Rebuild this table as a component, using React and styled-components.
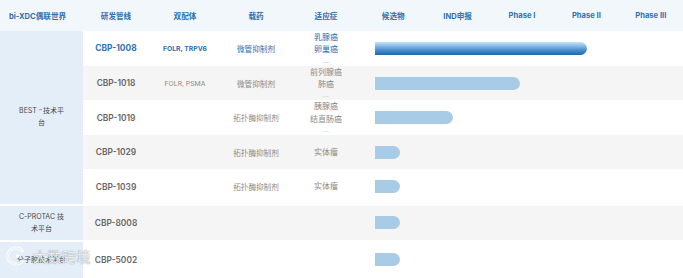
import React from 'react';
import styled, { createGlobalStyle } from 'styled-components';

const GlobalStyle = createGlobalStyle`
  html, body {
    margin: 0;
    padding: 0;
    background: #ffffff;
  }
  body {
    font-family: Inter, "Noto Sans CJK SC", sans-serif;
    width: 683px;
    height: 278px;
    overflow: hidden;
  }
`;

const Table = styled.div`
  position: relative;
  width: 683px;
  display: flex;
  flex-direction: column;
`;

const Header = styled.div`
  display: grid;
  grid-template-columns: 83px 66px 72px 70px 70px repeat(5, 1fr);
  height: 31px;
  background: #f2f7fc;
  align-items: center;
`;

const HeadCell = styled.div`
  text-align: center;
  font-size: 7.6px;
  font-weight: 700;
  color: #2f70ae;
  white-space: nowrap;
  padding-right: ${p => (p.$first ? '8px' : '0')};
`;

const Group = styled.div`
  display: flex;
  margin-top: ${p => (p.$first ? '0' : '2px')};
`;

const Platform = styled.div`
  width: 83px;
  flex-shrink: 0;
  background: #e3eef9;
  display: flex;
  align-items: center;
  justify-content: center;
`;

const PlatformText = styled.div`
  width: 51px;
  text-align: center;
  font-size: 7px;
  line-height: 12px;
  color: #4a4a4a;
`;

const Tm = styled.span`
  display: inline-block;
  font-size: 5px;
  line-height: 12px;
  vertical-align: top;
  margin-right: 1px;
`;

const Rows = styled.div`
  flex: 1;
  display: flex;
  flex-direction: column;
`;

const Row = styled.div`
  display: grid;
  grid-template-columns: 66px 72px 70px 70px 1fr;
  height: ${p => p.$h}px;
  align-items: center;
  background: ${p => (p.$gray ? '#f5f5f5' : '#ffffff')};
`;

const Code = styled.div`
  text-align: center;
  font-size: 8.4px;
  color: ${p => (p.$active ? '#2f70b0' : '#666666')};
  font-weight: ${p => (p.$active ? 700 : 600)};
`;

const Ligand = styled.div`
  text-align: center;
  font-size: 6.8px;
  white-space: nowrap;
  color: ${p => (p.$active ? '#2f70b0' : '#8a8a8a')};
  font-weight: ${p => (p.$active ? 700 : 400)};
`;

const Drug = styled.div`
  text-align: center;
  font-size: 7.6px;
  color: ${p => (p.$active ? '#2f70b0' : '#8a8a8a')};
`;

const Indication = styled.div`
  text-align: center;
  font-size: 8px;
  line-height: 12.4px;
  color: ${p => (p.$active ? '#2f70b0' : '#8a8a8a')};
  display: flex;
  flex-direction: column;
  align-items: center;
`;

const Dots = styled.span`
  font-size: 6px;
  line-height: 10px;
  letter-spacing: 0.5px;
`;

const Track = styled.div`
  padding-left: 14px;
  display: flex;
  align-items: center;
`;

const Bar = styled.div`
  width: ${p => p.$w}px;
  height: 13px;
  border-radius: 0 7px 7px 0;
  background: ${p =>
    p.$active
      ? 'linear-gradient(to bottom, #c6e3f8 0%, #8cc0ea 28%, #4a8fd0 62%, #1d66ae 100%)'
      : '#a9cce6'};
`;

const Watermark = styled.div`
  position: absolute;
  left: 5px;
  top: 246px;
  display: flex;
  align-items: center;
  gap: 6px;
  pointer-events: none;
`;

const WatermarkText = styled.span`
  font-family: "Noto Sans CJK SC", sans-serif;
  font-size: 14px;
  font-weight: 400;
  color: rgba(255, 255, 255, 0.85);
  letter-spacing: 0.5px;
  text-shadow: 0 0 1px rgba(120, 130, 140, 0.7), 0 0 1px rgba(120, 130, 140, 0.7);
`;

const headers = ['bi-XDC偶联世界', '研发管线', '双配体', '载药', '适应症', '候选物', 'IND申报', 'Phase I', 'Phase II', 'Phase III'];

const groups = [
  {
    platform: (
      <>
        BEST <Tm>™</Tm>技术平台
      </>
    ),
    h: 34.6,
    rows: [
      { code: 'CBP-1008', ligand: 'FOLR, TRPV6', drug: '微管抑制剂', ind: ['乳腺癌', '卵巢癌'], more: true, bar: 212, active: true },
      { code: 'CBP-1018', ligand: 'FOLR, PSMA', drug: '微管抑制剂', ind: ['前列腺癌', '肺癌'], more: true, bar: 145 },
      { code: 'CBP-1019', ligand: '', drug: '拓扑酶抑制剂', ind: ['胰腺癌', '结直肠癌'], more: true, bar: 78 },
      { code: 'CBP-1029', ligand: '', drug: '拓扑酶抑制剂', ind: ['实体瘤'], bar: 25 },
      { code: 'CBP-1039', ligand: '', drug: '拓扑酶抑制剂', ind: ['实体瘤'], bar: 25 },
    ],
  },
  {
    platform: 'C-PROTAC 技术平台',
    h: 34,
    rows: [{ code: 'CBP-8008', ligand: '', drug: '', ind: [], bar: 25 }],
  },
  {
    platform: '分子胶技术平台',
    h: 36,
    rows: [{ code: 'CBP-5002', ligand: '', drug: '', ind: [], bar: 25 }],
  },
];

function LogoMark() {
  return (
    <svg width="22" height="20" viewBox="0 0 24 22">
      <path
        d="M19 5.5 A9 9 0 1 0 19 16.5"
        fill="none"
        stroke="rgba(255,255,255,0.9)"
        strokeWidth="3.2"
        strokeLinecap="round"
      />
      <path
        d="M19 5.5 A9 9 0 1 0 19 16.5"
        fill="none"
        stroke="rgba(130,140,150,0.35)"
        strokeWidth="0.6"
      />
      <circle cx="14" cy="11" r="2" fill="rgba(255,255,255,0.9)" />
    </svg>
  );
}

export default function App() {
  let index = 0;
  return (
    <>
      <GlobalStyle />
      <Table>
        <Header>
          {headers.map((h, i) => (
            <HeadCell key={h} $first={i === 0}>{h}</HeadCell>
          ))}
        </Header>
        {groups.map((g, gi) => (
          <Group key={gi} $first={gi === 0}>
            <Platform>
              <PlatformText>{g.platform}</PlatformText>
            </Platform>
            <Rows>
              {g.rows.map(r => {
                const gray = index % 2 === 1;
                index += 1;
                return (
                  <Row key={r.code} $h={g.h} $gray={gray}>
                    <Code $active={r.active}>{r.code}</Code>
                    <Ligand $active={r.active}>{r.ligand}</Ligand>
                    <Drug $active={r.active}>{r.drug}</Drug>
                    <Indication $active={r.active}>
                      {r.ind.map(t => (
                        <span key={t}>{t}</span>
                      ))}
                      {r.more && <Dots>...</Dots>}
                    </Indication>
                    <Track>
                      <Bar $w={r.bar} $active={r.active} />
                    </Track>
                  </Row>
                );
              })}
            </Rows>
          </Group>
        ))}
        <Watermark>
          <LogoMark />
          <WatermarkText>大数跨境</WatermarkText>
        </Watermark>
      </Table>
    </>
  );
}
